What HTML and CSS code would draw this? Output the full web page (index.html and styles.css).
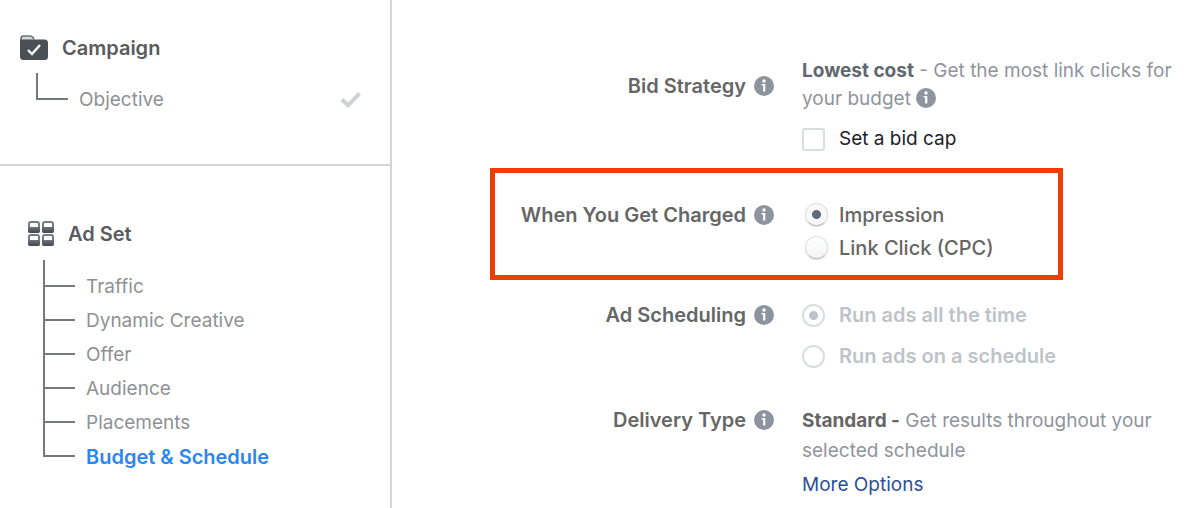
FILE: index.html
```html
<!DOCTYPE html>
<html lang="en">
<head>
  <meta charset="UTF-8" />
  <meta name="viewport" content="width=device-width, initial-scale=1" />
  <title>Budget &amp; Schedule</title>
  <link rel="stylesheet" href="styles.css">
</head>
<body>
  <!-- shared info icon -->
  <svg class="sprite" aria-hidden="true">
    <symbol id="info" viewBox="0 0 20 20">
      <circle cx="10" cy="10" r="10" fill="#8d949e" />
      <circle cx="10" cy="5" r="1.7" fill="#fff" />
      <path d="M7.6 8h3.7v7.6H9.1V9.6H7.6z" fill="#fff" />
    </symbol>
  </svg>

  <div class="page">
    <nav class="sidebar">
      <section class="group">
        <h2 class="group-title">
          <svg width="28" height="26" viewBox="0 0 28 26" aria-hidden="true">
            <path d="M1 7V3.5Q1 1 3.5 1H10q2 0 3 1.5l1 2" fill="#d5d7da" stroke="#6b6f75" stroke-width="1.6" />
            <path d="M0 4.500h24.500Q28 4.500 28 8v13.500q0 3.500-3.500 3.500h-21Q0 25 0 21.500z" fill="#4b4f56" />
            <path d="M8 15l4 4 8-9" fill="none" stroke="#fff" stroke-width="2.400" />
          </svg>
          Campaign
        </h2>
        <ul class="tree">
          <li>
            <a href="#">Objective</a>
            <svg class="done" width="22" height="18" viewBox="0 0 22 18" aria-hidden="true">
              <path d="M2 8.500l6 5.800L19.500 2.500" fill="none" stroke="#ced1d6" stroke-width="4" />
            </svg>
          </li>
        </ul>
      </section>

      <section class="group group-adset">
        <h2 class="group-title">
          <svg width="26" height="26" viewBox="0 0 26 26" aria-hidden="true">
            <defs>
              <linearGradient id="shade" x1="0" y1="0" x2="0" y2="1">
                <stop offset="0" stop-color="#70747a" />
                <stop offset="1" stop-color="#42464d" />
              </linearGradient>
              <g id="tile">
                <rect x="1" y="1" width="10" height="10" rx="2" fill="#fff" stroke="#777b80" stroke-width="2" />
                <path d="M0 6h12v4q0 2-2 2H2q-2 0-2-2z" fill="url(#shade)" />
              </g>
            </defs>
            <use href="#tile" />
            <use href="#tile" x="14" />
            <use href="#tile" y="13" />
            <use href="#tile" x="14" y="13" />
          </svg>
          Ad Set
        </h2>
        <ul class="tree">
          <li><a href="#">Traffic</a></li>
          <li><a href="#">Dynamic Creative</a></li>
          <li><a href="#">Offer</a></li>
          <li><a href="#">Audience</a></li>
          <li><a href="#">Placements</a></li>
          <li><a href="#" class="active">Budget &amp; Schedule</a></li>
        </ul>
      </section>
    </nav>

    <main class="settings">
      <div class="row row-bid">
        <div class="label">Bid Strategy <svg class="info"><use href="#info" /></svg></div>
        <div class="value">
          <p class="bid-text"><strong>Lowest cost</strong> - Get the most link clicks for your budget <svg class="info"><use href="#info" /></svg></p>
          <label class="option cap"><input type="checkbox" /> Set a bid cap</label>
        </div>
      </div>

      <div class="row row-charged" role="radiogroup" aria-labelledby="charged">
        <div class="label"><span id="charged">When You Get Charged</span> <svg class="info"><use href="#info" /></svg></div>
        <div class="value">
          <label class="option"><input type="radio" name="charged" checked /> Impression</label>
          <label class="option"><input type="radio" name="charged" /> Link Click (CPC)</label>
        </div>
      </div>

      <div class="row row-scheduling" role="radiogroup" aria-labelledby="scheduling">
        <div class="label"><span id="scheduling">Ad Scheduling</span> <svg class="info"><use href="#info" /></svg></div>
        <div class="value">
          <label class="option"><input type="radio" name="scheduling" checked disabled /> Run ads all the time</label>
          <label class="option"><input type="radio" name="scheduling" disabled /> Run ads on a schedule</label>
        </div>
      </div>

      <div class="row row-delivery">
        <div class="label">Delivery Type <svg class="info"><use href="#info" /></svg></div>
        <div class="value">
          <p><strong>Standard -</strong> Get results throughout your selected schedule</p>
          <a href="#" class="more">More Options</a>
        </div>
      </div>
    </main>
  </div>
</body>
</html>
```
FILE: styles.css
```css
*, *::before {
  box-sizing: border-box;
}
body {
  margin: 0;
  font-family: Inter, Roboto, "Liberation Sans", sans-serif;
  font-size: 19px;
  line-height: 28px;
  color: #90949c;
  background: #fff;
}
p, h2, ul {
  margin: 0;
  padding: 0;
}
a {
  color: inherit;
  text-decoration: none;
}
.sprite {
  display: none;
}
.page {
  display: flex;
  min-height: 100vh;
}

/* sidebar */
.sidebar {
  flex: none;
  width: 392px;
  border-right: 2px solid #d5d6d9;
}
.group {
  padding: 32px 28px 64px 20px;
  border-bottom: 2px solid #d5d6d9;
}
.group-adset {
  padding: 52px 28px 0 28px;
  border-bottom: none;
}
.group-title {
  display: flex;
  align-items: center;
  gap: 14px;
  height: 32px;
  font-size: 20px;
  font-weight: 600;
  color: #5a5b5d;
}
.tree {
  list-style: none;
  margin: 9px 0 0 16px;
  color: #8f9194;
}
.group-adset .tree {
  margin: 10px 0 0 15px;
}
/* each branch reaches down to the middle of its own text */
.tree li {
  display: flex;
  align-items: flex-end;
  gap: 11px;
}
.tree li::before {
  content: "";
  width: 32px;
  height: 34px;
  border-left: 2px solid #75787c;
  border-bottom: 2px solid #75787c;
}
.tree li:first-child::before {
  height: 27px;
}
.tree a {
  margin-bottom: -14px;
}
.tree .active {
  font-size: 20px;
  font-weight: 600;
  color: #2a87f0;
}
.done {
  margin: 0 0 -9px auto;
}

/* settings */
.settings {
  flex: 1;
  padding: 57px 20px 8px 98px;
}
.row {
  display: grid;
  grid-template-columns: 284px 1fr;
  column-gap: 28px;
}
.label {
  display: flex;
  justify-content: flex-end;
  align-items: center;
  gap: 8px;
  height: 28px;
  font-size: 20px;
  font-weight: 600;
  color: #666;
}
.info {
  flex: none;
  width: 20px;
  height: 20px;
}
strong {
  font-weight: 700;
  color: #606770;
}
.option {
  display: flex;
  align-items: center;
  gap: 14px;
  font-size: 20px;
  font-weight: 600;
}
.row-bid .label {
  margin-top: 15px;
}
.bid-text .info {
  vertical-align: -3px;
}
.cap {
  margin-top: 12px;
  font-size: 19px;
  font-weight: 400;
  color: #1d2129;
}

.row-charged {
  grid-template-columns: 279px 1fr;
  max-width: 573px;
  margin-top: 15px;
  padding: 25px 0 11px;
  border: 5px solid #f03d00;
}
.row-charged .label {
  height: 33px;
}
.row-charged .option {
  height: 33px;
  font-weight: 500;
  color: #666;
}

.row-scheduling {
  margin-top: 21px;
}
.row-scheduling .option {
  color: #bec3c9;
}
.row-scheduling .option + .option {
  margin-top: 13px;
}

.row-delivery {
  margin-top: 36px;
}
.row-delivery .value {
  line-height: 30px;
}
.row-delivery strong {
  color: #666;
}
.more {
  display: inline-block;
  margin-top: 4px;
  color: #2d4f98;
}

/* controls */
input {
  appearance: none;
  flex: none;
  width: 23px;
  height: 23px;
  margin: 0;
  border: 2px solid #dadde1;
  background: #fff;
}
input[type="checkbox"] {
  border-radius: 3px;
}
input[type="radio"] {
  border-radius: 50%;
}
input[type="radio"]:checked {
  background: radial-gradient(circle, #bec3c9 4px, #fff 5px);
}
.row-charged input {
  margin-left: 3px;
  margin-right: -3px;
  border: 1px solid #e0e0e0;
  border-bottom-color: #c4c4c4;
  background: linear-gradient(#fff, #f3f4f5);
  box-shadow: 0 1px 1px #ddd;
}
.row-charged input:checked {
  background: radial-gradient(circle, #606b79 4px, #f8f9fa 5px);
}
```
